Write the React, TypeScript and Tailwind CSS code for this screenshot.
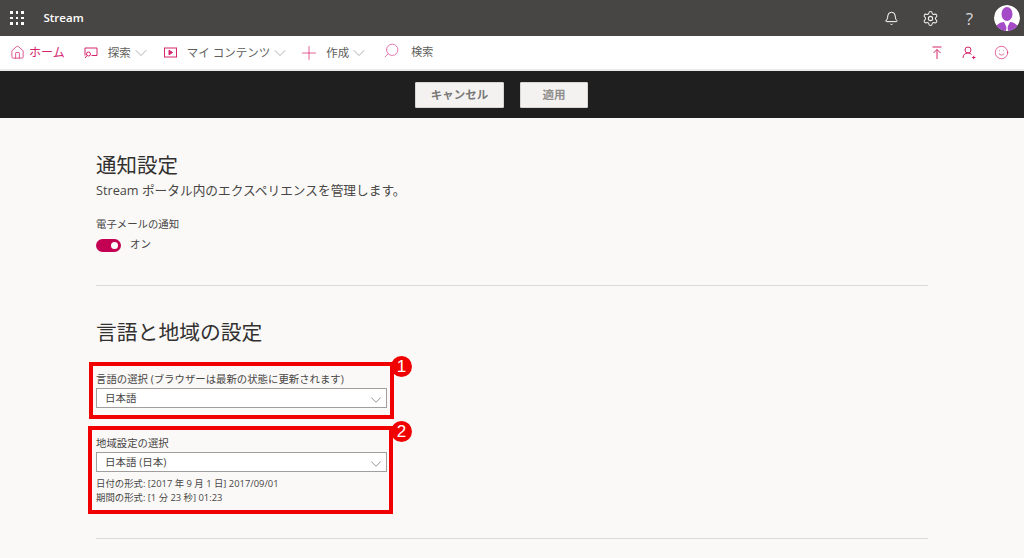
import { Bell, ChevronDown, Home, Plus, Search, Settings, Smile } from "lucide-react";
import React from "react";

const jp = "font-['Open_Sans','Noto_Sans_CJK_JP',sans-serif]";

function Waffle() {
    return (
        <div className="grid grid-cols-3 gap-[3px]">
            {[0, 1, 2, 3, 4, 5, 6, 7, 8].map((i) => (
                <span key={i} className="w-[2.5px] h-[2.5px] bg-white" />
            ))}
        </div>
    );
}

function Avatar() {
    return (
        <svg width="26" height="26" viewBox="0 0 26 26" className="rounded-full">
            <circle cx="13" cy="13" r="13" fill="#fff" />
            <ellipse cx="13" cy="9" rx="5.5" ry="7" fill="#a64bc8" />
            <path d="M1 26c0-6 5-9 9-9l3 6 3-6c4 0 9 3 9 9z" fill="#a64bc8" />
            <path d="M13 18l-1 8h2z" fill="#fff" />
        </svg>
    );
}

function NavItem({ icon, label, gap, chevronMargin }: { icon: React.ReactNode; label: string; gap: string; chevronMargin: string }) {
    return (
        <div className={`flex items-center ${gap}`}>
            {icon}
            <span className="text-[11.500px] text-[#605e5c] whitespace-nowrap">{label}</span>
            <ChevronDown size={20} strokeWidth={0.8} className={`text-[#8a8886] ${chevronMargin}`} />
        </div>
    );
}

function Badge({ n, position }: { n: string; position: string }) {
    return (
        <span className={`absolute ${position} w-[21px] h-[21px] rounded-full bg-[#f00000] text-white text-[17px] font-['Liberation_Sans',sans-serif] flex items-center justify-center`}>
            {n}
        </span>
    );
}

function Select({ value }: { value: string }) {
    return (
        <div className="h-[20px] w-[291px] bg-white border border-[#a19f9d] pl-[8px] pr-[1px] flex items-center justify-between">
            <span className="mt-[1px] text-[10.500px] text-[#484644]">{value}</span>
            <ChevronDown size={18} strokeWidth={0.9} className="text-[#605e5c] mt-[3px]" />
        </div>
    );
}

export default function App() {
    return (
        <div className={`w-[1024px] h-[558px] overflow-hidden bg-[#faf9f8] ${jp}`}>
            <header className="h-[36px] bg-[#484644] flex items-center pl-[10px] pr-[4px] text-white">
                <Waffle />
                <span className="ml-[20px] text-[11.500px] font-semibold font-['Open_Sans',sans-serif]">Stream</span>
                <div className="ml-auto flex items-center">
                    <Bell size={15} strokeWidth={1.6} className="-translate-x-[4px]" />
                    <Settings size={17} strokeWidth={1.5} className="ml-[21px] -translate-x-[2px] text-[#eeeeee]" />
                    <span className="ml-[25px] text-[17px] leading-none text-[#d8d8d8] font-['Open_Sans',sans-serif]">?</span>
                    <span className="ml-[21px]"><Avatar /></span>
                </div>
            </header>

            <nav className="h-[33px] bg-white flex items-center pl-[10px] pr-[15px]">
                <div className="flex items-center gap-[4px] text-[#d6246e]">
                    <Home size={15} strokeWidth={1.2} />
                    <span className="text-[12px]">ホーム</span>
                </div>
                <div className="ml-[19px]">
                    <NavItem
                        gap="gap-[10px]"
                        chevronMargin="-ml-[10px]"
                        label="探索"
                        icon={
                            <svg width="14" height="13" viewBox="0 0 14 13" fill="none" stroke="#d6246e" strokeWidth="1">
                                <path d="M1 9.5V2h12v7.500H7.500" />
                                <circle cx="4.500" cy="8" r="2" />
                                <path d="M3 9.500L1 12" />
                            </svg>
                        }
                    />
                </div>
                <div className="ml-[13px]">
                    <NavItem
                        gap="gap-[10px]"
                        chevronMargin="-ml-[10px]"
                        label="マイ コンテンツ"
                        icon={
                            <svg width="13" height="11" viewBox="0 0 13 11" fill="none" stroke="#d6246e" strokeWidth="1">
                                <rect x="0.500" y="1" width="12" height="9" />
                                <path d="M5 3.200v4.600L8.500 5.500z" fill="#d6246e" />
                            </svg>
                        }
                    />
                </div>
                <div className="ml-[8px]">
                    <NavItem
                        gap="gap-[6px]"
                        chevronMargin="-ml-[6px]"
                        label="作成"
                        icon={<Plus size={22} strokeWidth={0.8} className="text-[#d6246e]" />}
                    />
                </div>
                <Search size={17} strokeWidth={1.1} className="ml-[14px] text-[#e0559a] -scale-x-100 -translate-y-[2px]" />
                <span className="ml-[11px] text-[11px] text-[#605e5c]">検索</span>
                <div className="ml-auto flex items-center gap-[18px] text-[#d6246e]">
                    <svg width="12" height="14" viewBox="0 0 12 14" fill="none" stroke="currentColor" strokeWidth="1" className="mr-[1px]">
                        <path d="M1.500 1h9M6 13V3.500M2.500 7L6 3.500 9.500 7" />
                    </svg>
                    <svg width="14" height="14" viewBox="0 0 14 14" fill="none" stroke="currentColor" strokeWidth="1">
                        <circle cx="6" cy="4" r="3" />
                        <path d="M1 12c0-3 2-5 5-5 1.500 0 2.700.5 3.500 1.400M10 11.500h3.500M11.700 9.800v3.400" />
                    </svg>
                    <Smile size={15} strokeWidth={1.1} />
                </div>
            </nav>

            <div className="h-[2px] bg-[#edebe9]" />

            <div className="h-[47px] bg-[#201f1f] flex items-center justify-center gap-[16px] pr-[21px]">
                <button className="w-[89px] h-[26px] bg-[#f3f2f1] border border-[#d8d6d4] text-[11.500px] font-semibold text-[#7a7876] rounded-[1px]">
                    キャンセル
                </button>
                <button className="w-[68px] h-[26px] bg-[#f3f2f1] border border-[#d8d6d4] text-[11.500px] font-semibold text-[#8f8d8b] rounded-[1px]">
                    適用
                </button>
            </div>

            <main className="px-[96px] pt-[33px]">
                <h2 className="text-[20.500px] leading-[28px] text-[#323130]">通知設定</h2>
                <p className="mt-[2px] text-[12.700px] leading-[18px] text-[#484644]">Stream ポータル内のエクスペリエンスを管理します。</p>
                <p className="mt-[17px] text-[10.400px] leading-[16px] text-[#484644]">電子メールの通知</p>

                <div className="mt-[5px] h-[16px] flex items-center gap-[9px]">
                    <div className="w-[25px] h-[13px] rounded-full bg-[#c30052] flex items-center justify-end pr-[3px]">
                        <span className="w-[7px] h-[7px] rounded-full bg-white" />
                    </div>
                    <span className="text-[10.500px] text-[#484644]">オン</span>
                </div>

                <hr className="mt-[32px] border-t border-[#dcdad8]" />

                <h2 className="mt-[32px] text-[20.800px] leading-[28px] text-[#323130]">言語と地域の設定</h2>

                <div className="relative mt-[16px] -ml-[7px] w-[305px] h-[57px] border-[4px] border-[#f00000] pl-[3px] pt-[5px]">
                    <p className="text-[10.400px] leading-[17px] text-[#484644] whitespace-nowrap">言語の選択 (ブラウザーは最新の状態に更新されます)</p>
                    <Select value="日本語" />
                    <Badge n="1" position="-top-[10px] -right-[22px]" />
                </div>

                <div className="relative mt-[7px] -ml-[8px] w-[305px] h-[88px] border-[4px] border-[#f00000] pl-[4px] pt-[5px]">
                    <p className="text-[10.400px] leading-[16px] text-[#484644]">地域設定の選択</p>
                    <div className="mt-[1px]">
                        <Select value="日本語 (日本)" />
                    </div>
                    <p className="mt-[5px] text-[9.400px] leading-[14px] text-[#484644] whitespace-nowrap">日付の形式: [2017 年 9 月 1 日] 2017/09/01</p>
                    <p className="text-[9.400px] leading-[14px] text-[#484644] whitespace-nowrap">期間の形式: [1 分 23 秒] 01:23</p>
                    <Badge n="2" position="-top-[9px] -right-[23px]" />
                </div>

                <hr className="mt-[24px] border-t border-[#dcdad8]" />
            </main>
        </div>
    );
}
